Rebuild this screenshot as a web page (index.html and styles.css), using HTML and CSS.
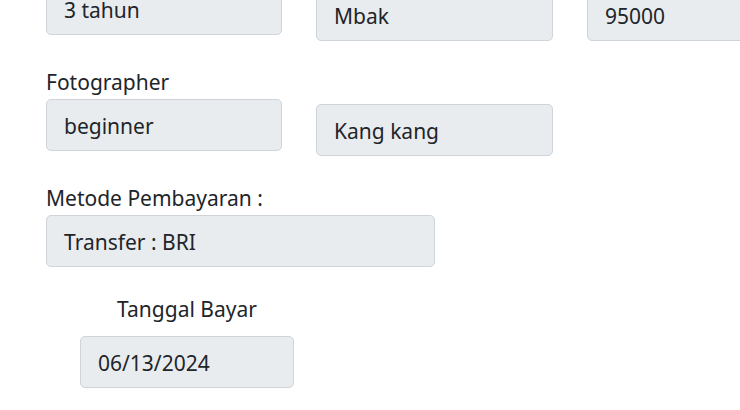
FILE: index.html
```html
<!DOCTYPE html>
<html lang="id">
<head>
<meta charset="utf-8">
<title>Detail</title>
<link rel="stylesheet" href="styles.css">
</head>
<body>
<div class="form">
  <div class="row">
    <div class="col"><div class="input">3 tahun</div></div>
    <div class="col shift-top"><div class="input">Mbak</div></div>
    <div class="col shift-top"><div class="input">95000</div></div>
  </div>
  <div class="row group">
    <div class="col">
      <label class="label">Fotographer</label>
      <div class="input">beginner</div>
    </div>
    <div class="col shift-label"><div class="input">Kang kang</div></div>
  </div>
  <div class="group method-group">
    <label class="label">Metode Pembayaran :</label>
    <div class="input wide">Transfer : BRI</div>
  </div>
  <div class="group date-group">
    <label class="label center">Tanggal Bayar</label>
    <div class="input date">06/13/2024</div>
  </div>
</div>
</body>
</html>
```
FILE: styles.css
```css
html, body {
  margin: 0;
  padding: 0;
  overflow: hidden;
  background: #ffffff;
}
body {
  font-family: "Noto Sans", "Open Sans", sans-serif;
  font-size: 21px;
  line-height: 30px;
  color: #212529;
}
.form {
  padding-left: 46px;
  margin-top: -17px;
  width: 900px;
}
.row {
  display: grid;
  grid-template-columns: 236px 237px 237px;
  column-gap: 34px;
  align-items: start;
}
.shift-top {
  margin-top: 6px;
}
.group {
  margin-top: 26px;
}
.method-group {
  margin-top: 27px;
}
.shift-label {
  margin-top: 37px;
}
.label {
  display: block;
  margin-bottom: 2px;
}
.input {
  box-sizing: border-box;
  height: 52px;
  padding: 11px 17px 9px;
  border: 1px solid #ced4da;
  border-radius: 5px;
  background: #e9ecef;
  color: #212529;
  white-space: nowrap;
}
.wide {
  width: 389px;
}
.date-group {
  margin-top: 27px;
  margin-left: 34px;
  width: 214px;
}
.center {
  text-align: center;
  margin-bottom: 12px;
}
.date {
  width: 214px;
}
```
